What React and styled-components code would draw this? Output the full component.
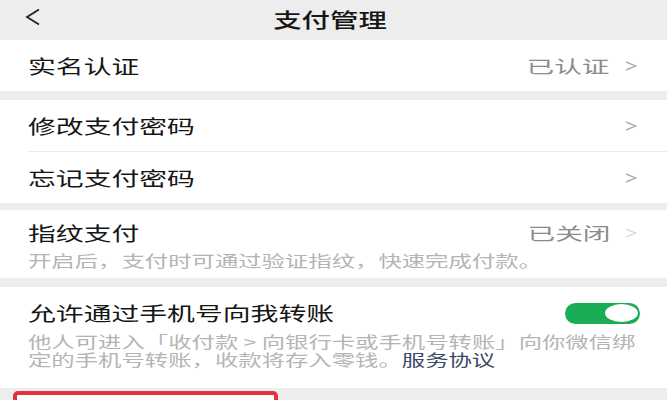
import React from "react";
import styled, { createGlobalStyle } from "styled-components";

const GlobalStyle = createGlobalStyle`
    body {
        margin: 0;
        background: #ededed;
        font-family: "Noto Sans CJK SC", "Noto Sans", sans-serif;
        color: #161616;
    }
`

const Page = styled.div`
    width: 667px;
    height: 400px;
    overflow: hidden;
    background: #ededed;
`

const Header = styled.div`
    height: 40px;
    display: flex;
    align-items: center;
    justify-content: center;
    position: relative;
`

const Back = styled.svg`
    position: absolute;
    left: 25px;
    top: 8px;
`

const Title = styled.span`
    display: inline-block;
    font-size: 20px;
    font-weight: 500;
    line-height: 26px;
    margin-right: 7px;
    transform: scaleX(1.42);
`

const Group = styled.div`
    background: #fff;
    margin-top: ${p => p.$gap || 0}px;
    padding: ${p => p.$pad || "0"};
`

const Row = styled.div`
    height: ${p => p.$h || 51}px;
    display: flex;
    align-items: center;
    justify-content: space-between;
    padding: 0 ${p => p.$right || 30}px 0 28px;
`

const Divider = styled.div`
    height: 1px;
    margin-left: 28px;
    background: #ececec;
`

const Label = styled.span`
    display: inline-block;
    font-size: 19.6px;
    line-height: 26px;
    white-space: nowrap;
    transform: scaleX(1.42);
    transform-origin: left center;
`

const Right = styled.div`
    display: flex;
    align-items: center;
    gap: ${p => p.$gap || 16}px;
`

const Value = styled.span`
    display: inline-block;
    font-size: 17.5px;
    line-height: 24px;
    color: #8c8c8c;
    white-space: nowrap;
    transform: scaleX(1.58);
    transform-origin: right center;
`

const Note = styled.div`
    padding-left: 28px;
    margin-top: ${p => p.$top || 0}px;
    font-size: 16px;
    line-height: ${p => p.$lh || 18}px;
    color: #b4b4b4;
`

const NoteLine = styled.span`
    display: block;
    white-space: nowrap;
    width: 0;
    transform: scaleX(1.46);
    transform-origin: left center;
`

const Link = styled.span`
    color: #3c4a68;
`

const Toggle = styled.div`
    width: 75px;
    height: 21px;
    border-radius: 11px;
    background: #1bad56;
    display: flex;
    align-items: center;
    justify-content: flex-end;
    padding: 0 2px;
    box-sizing: border-box;
`

const Knob = styled.div`
    width: 33px;
    height: 18px;
    border-radius: 50%;
    background: #fff;
`

const Highlight = styled.div`
    width: 265px;
    height: 30px;
    margin: 3px 0 0 13px;
    box-sizing: border-box;
    border: 4px solid #e3343c;
    border-radius: 5px;
    background: #fff;
`

function Chevron({ color = "#b0b0b0" }) {
    return (
        <svg width="12" height="10" viewBox="0 0 12 10">
            <polyline points="1,1 11,5 1,9" fill="none" stroke={color} strokeWidth="1.4" />
        </svg>
    )
}

export default function App() {
    return (
        <Page>
            <GlobalStyle />
            <Header>
                <Back width="16" height="18" viewBox="0 0 16 18">
                    <polyline points="14,1.5 2,9 14,16.5" fill="none" stroke="#222" strokeWidth="1.8" />
                </Back>
                <Title>支付管理</Title>
            </Header>

            <Group>
                <Row>
                    <Label>实名认证</Label>
                    <Right>
                        <Value>已认证</Value>
                        <Chevron />
                    </Right>
                </Row>
            </Group>

            <Group $gap={9}>
                <Row>
                    <Label>修改支付密码</Label>
                    <Chevron />
                </Row>
                <Divider />
                <Row>
                    <Label>忘记支付密码</Label>
                    <Chevron />
                </Row>
            </Group>

            <Group $gap={7} $pad="10px 0 6px">
                <Row $h={26}>
                    <Label>指纹支付</Label>
                    <Right $gap={15}>
                        <Value>已关闭</Value>
                        <Chevron color="#dcdcdc" />
                    </Right>
                </Row>
                <Note $top={2} $lh={24}>
                    <NoteLine>开启后，支付时可通过验证指纹，快速完成付款。</NoteLine>
                </Note>
            </Group>

            <Group $gap={9} $pad="13px 0 20px">
                <Row $h={26} $right={27}>
                    <Label>允许通过手机号向我转账</Label>
                    <Toggle>
                        <Knob />
                    </Toggle>
                </Row>
                <Note $top={6}>
                    <NoteLine>他人可进入「收付款 &gt; 向银行卡或手机号转账」向你微信绑</NoteLine>
                    <NoteLine>定的手机号转账，收款将存入零钱。<Link>服务协议</Link></NoteLine>
                </Note>
            </Group>

            <Highlight />
        </Page>
    )
}
